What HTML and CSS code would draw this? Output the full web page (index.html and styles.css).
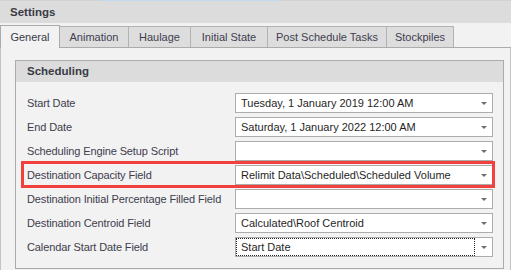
FILE: index.html
```html
<!DOCTYPE html>
<html>
<head>
<meta charset="utf-8">
<link rel="stylesheet" href="styles.css">
</head>
<body>
<div class="topline"><span class="topsel"></span></div>
<div class="header">Settings</div>
<div class="tabs">
  <div class="tab active" style="width:60px">General</div>
  <div class="tab first-after" style="width:68px">Animation</div>
  <div class="tab" style="width:62px">Haulage</div>
  <div class="tab" style="width:77px">Initial State</div>
  <div class="tab" style="width:119px">Post Schedule Tasks</div>
  <div class="tab last" style="width:68px">Stockpiles</div>
</div>
<div class="page">
  <div class="group">
    <div class="group-head">Scheduling</div>
    <div class="group-body">
      <div class="row"><div class="label">Start Date</div><div class="input"><span class="val">Tuesday, 1 January 2019 12:00 AM</span><span class="arrow"></span></div></div>
      <div class="row"><div class="label">End Date</div><div class="input"><span class="val">Saturday, 1 January 2022 12:00 AM</span><span class="arrow"></span></div></div>
      <div class="row"><div class="label">Scheduling Engine Setup Script</div><div class="input"><span class="val"></span><span class="arrow"></span></div></div>
      <div class="row hl"><div class="label">Destination Capacity Field</div><div class="input"><span class="val">Relimit Data\Scheduled\Scheduled Volume</span><span class="arrow"></span></div><div class="redbox"></div></div>
      <div class="row"><div class="label">Destination Initial Percentage Filled Field</div><div class="input"><span class="val"></span><span class="arrow"></span></div></div>
      <div class="row"><div class="label">Destination Centroid Field</div><div class="input"><span class="val">Calculated\Roof Centroid</span><span class="arrow"></span></div></div>
      <div class="row"><div class="label">Calendar Start Date Field</div><div class="input focus"><span class="val">Start Date</span><span class="arrow"></span></div></div>
    </div>
  </div>
</div>
</body>
</html>
```

FILE: styles.css
```css
* { box-sizing: border-box; }
html, body { margin: 0; padding: 0; }
body {
  width: 511px;
  height: 270px;
  overflow: hidden;
  background: #f2f2f2;
  font-family: "Liberation Sans", Arial, sans-serif;
  font-size: 11px;
  color: #3d3d4d;
}
.topline {
  height: 1px;
  background: #d2d2d2;
  display: flex;
}
.topsel {
  margin-left: 100px;
  width: 180px;
  height: 1px;
  background: #c3d9ee;
}
.header {
  height: 22px;
  line-height: 22px;
  background: #dcdcdc;
  padding-left: 10px;
  font-weight: bold;
  font-size: 11.5px;
  color: #3a3a44;
}
.tabs {
  height: 25px;
  display: flex;
  align-items: flex-end;
  border-bottom: 1px solid #ababab;
  background: #f2f2f2;
}
.tab {
  height: 21px;
  line-height: 20px;
  text-align: center;
  background: #dddddd;
  border-top: 1px solid #b2b2b2;
  border-left: 1px solid #b2b2b2;
  color: #3e3e50;
  white-space: nowrap;
}
.tab.first-after { border-left: none; }
.tab.last { border-right: 1px solid #b2b2b2; }
.tab.active {
  height: 23px;
  margin-bottom: -1px;
  line-height: 22px;
  background: #f2f2f2;
  border: 1px solid #ababab;
  border-bottom: none;
  color: #3a3a48;
}
.page {
  border-left: 1px solid #c4c4c4;
  border-right: 1px solid #c4c4c4;
  padding: 12px 6px 0 14px;
  height: 222px;
}
.group {
  width: 489px;
  height: 209px;
  border: 1px solid #ababab;
  display: flex;
  flex-direction: column;
}
.group-head {
  height: 21px;
  line-height: 21px;
  background: #dcdcdc;
  padding-left: 11px;
  font-weight: bold;
  font-size: 11.5px;
  color: #3a3a44;
}
.group-body {
  padding: 9px 9px 0 11px;
  display: flex;
  flex-direction: column;
}
.row {
  position: relative;
  height: 24px;
  display: flex;
  align-items: center;
}
.label {
  width: 208px;
  white-space: nowrap;
  letter-spacing: -0.12px;
}
.input {
  width: 258px;
  height: 20px;
  background: #ffffff;
  border: 1px solid #acacac;
  display: flex;
  align-items: stretch;
  color: #1f1f1f;
}
.val {
  flex: 1;
  padding-left: 5px;
  line-height: 18px;
  white-space: nowrap;
  overflow: hidden;
}
.input.focus .val {
  border: 1px dotted #222;
  padding-left: 4px;
  line-height: 16px;
}
.arrow {
  width: 17px;
  position: relative;
}
.arrow::after {
  content: "";
  position: absolute;
  left: 6px;
  top: 8px;
  width: 0;
  height: 0;
  border-left: 3px solid transparent;
  border-right: 3px solid transparent;
  border-top: 3px solid #6e6e6e;
}
.redbox {
  position: absolute;
  left: -6px;
  top: -2px;
  width: 474px;
  height: 27px;
  border: 3px solid #f2403f;
  pointer-events: none;
}
```
